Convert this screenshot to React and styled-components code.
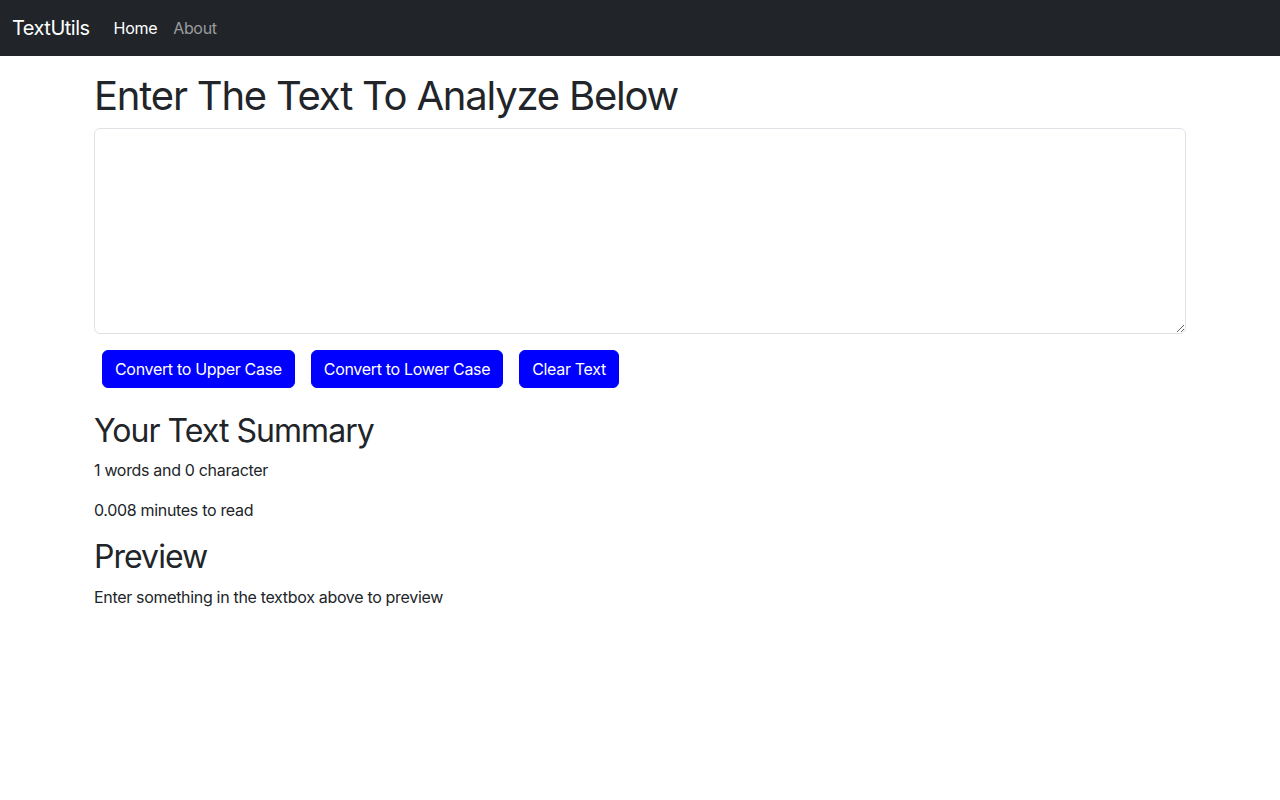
import styled, { createGlobalStyle } from 'styled-components'
import { useState } from 'react'

const GlobalStyle = createGlobalStyle`
  *, *::before, *::after { box-sizing: border-box; }
  body {
    margin: 0;
    font-family: Inter, "Noto Sans", sans-serif;
    font-size: 16px;
    line-height: 1.5;
    letter-spacing: -0.02em;
    color: #212529;
    background: #fff;
  }
`

const Navbar = styled.nav`
  display: flex;
  align-items: center;
  height: 56px;
  padding: 0 12px;
  background: #212529;
`

const Brand = styled.a`
  font-size: 20px;
  letter-spacing: -0.025em;
  color: #fff;
  margin-right: 16px;
  text-decoration: none;
`

const NavLinks = styled.ul`
  display: flex;
  list-style: none;
  margin: 0;
  padding: 0;
`

const NavLink = styled.a`
  display: block;
  padding: 8px;
  text-decoration: none;
  color: ${(p) => (p.$active ? '#fff' : 'rgba(255, 255, 255, 0.55)')};
`

const Container = styled.div`
  width: 1116px;
  margin: ${(p) => (p.$top ? p.$top : '16px')} auto 16px;
  padding: 0 12px;
`

const Title = styled.h1`
  font-size: 40px;
  font-weight: 400;
  line-height: 1.2;
  letter-spacing: -0.03em;
  margin: 0 0 8px;
`

const SubTitle = styled.h2`
  font-size: 32px;
  font-weight: 400;
  line-height: 1.2;
  letter-spacing: -0.03em;
  margin: 0 0 8px;
`

const TextBox = styled.textarea`
  display: block;
  width: 100%;
  height: 206px;
  padding: 6px 12px;
  font: inherit;
  color: #212529;
  border: 1px solid #dee2e6;
  border-radius: 6px;
  margin-bottom: 16px;
  outline: none;
`

const Button = styled.button`
  display: inline-block;
  margin: 0 8px;
  padding: 6px 12px;
  font: inherit;
  letter-spacing: inherit;
  color: #fff;
  background: #0000ff;
  border: 1px solid #0000ff;
  border-radius: 6px;
  cursor: pointer;
`

const Para = styled.p`
  margin: 0 0 16px;
`

export default function App() {
  const [text, setText] = useState('')
  const words = text.split(' ').length
  const chars = text.length

  return (
    <>
      <GlobalStyle />
      <Navbar>
        <Brand href='#'>TextUtils</Brand>
        <NavLinks>
          <li><NavLink $active href='#'>Home</NavLink></li>
          <li><NavLink href='#'>About</NavLink></li>
        </NavLinks>
      </Navbar>
      <Container>
        <Title>Enter The Text To Analyze Below</Title>
        <TextBox value={text} onChange={(e) => setText(e.target.value)} />
        <Button onClick={() => setText(text.toUpperCase())}>Convert to Upper Case</Button>
        <Button onClick={() => setText(text.toLowerCase())}>Convert to Lower Case</Button>
        <Button onClick={() => setText('')}>Clear Text</Button>
      </Container>
      <Container $top='24px'>
        <SubTitle>Your Text Summary</SubTitle>
        <Para>{words} words and {chars} character</Para>
        <Para>{0.008 * words} minutes to read</Para>
        <SubTitle>Preview</SubTitle>
        <Para>{text.length > 0 ? text : 'Enter something in the textbox above to preview'}</Para>
      </Container>
    </>
  )
}
